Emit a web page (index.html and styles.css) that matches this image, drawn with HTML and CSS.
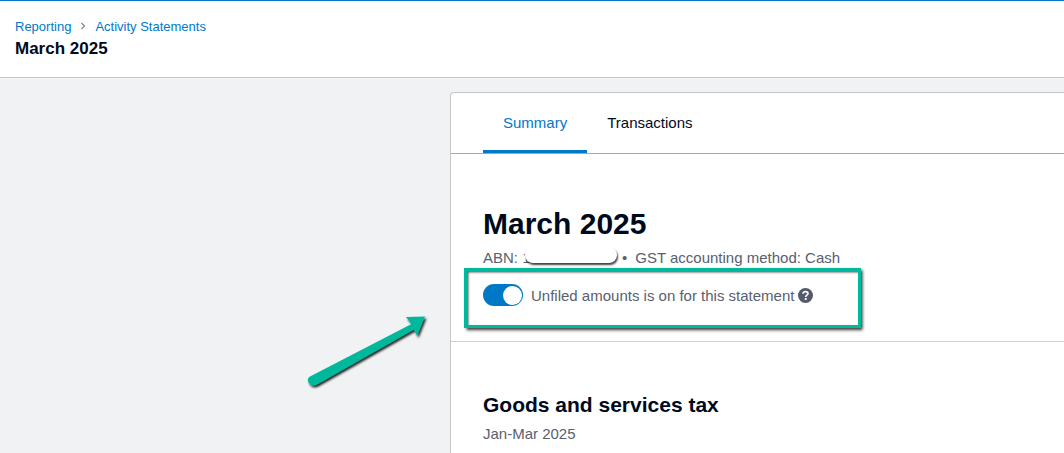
FILE: index.html
```html
<!DOCTYPE html>
<html lang="en">
<head>
    <meta charset="UTF-8">
    <meta name="viewport" content="width=device-width, initial-scale=1.0">
    <title>March 2025</title>
    <link rel="stylesheet" href="styles.css">
</head>
<body>
    <header class="page-header">
        <nav class="breadcrumbs">
            <a href="#">Reporting</a>
            <svg class="crumb-sep" width="6" height="8" viewBox="0 0 6 8"><path d="M1.5 1 L4.5 4 L1.5 7" fill="none" stroke="#7c8590" stroke-width="1.2"/></svg>
            <a href="#">Activity Statements</a>
        </nav>
        <div class="page-title">March 2025</div>
    </header>

    <main class="content">
        <section class="card">
            <div class="tabs">
                <a class="tab tab-active" href="#">Summary</a>
                <a class="tab" href="#">Transactions</a>
            </div>

            <div class="statement">
                <h1>March 2025</h1>
                <p class="meta">
                    <span class="abn">ABN: 1</span>
                    <span class="bullet">•</span>
                    <span>GST accounting method: Cash</span>
                </p>
                <div class="unfiled">
                    <span class="toggle"><span class="knob"></span></span>
                    <span>Unfiled amounts is on for this statement</span>
                    <svg class="help" width="15" height="15" viewBox="0 0 14 14">
                        <circle cx="7" cy="7" r="7" fill="#545a6a"/>
                        <path d="M4.7 5.400 C4.700 4.100 5.700 3.300 7 3.300 C8.300 3.300 9.300 4.100 9.300 5.200 C9.300 6.700 7.200 6.700 7.200 8.300" fill="none" stroke="#fff" stroke-width="1.6"/>
                        <rect x="6.300" y="9.300" width="1.800" height="1.800" fill="#fff"/>
                    </svg>
                </div>
                <div class="redaction"></div>
                <div class="highlight"></div>
            </div>

            <div class="gst">
                <h2>Goods and services tax</h2>
                <p class="period">Jan-Mar 2025</p>
            </div>
        </section>

        <svg class="arrow" width="140" height="90" viewBox="0 0 140 90">
            <defs>
                <filter id="arrow-shadow" x="-20%" y="-20%" width="140%" height="140%">
                    <feDropShadow dx="1.5" dy="2" stdDeviation="1.2" flood-color="#000" flood-opacity="0.85"/>
                </filter>
            </defs>
            <path filter="url(#arrow-shadow)" fill="#00b99c" d="M108.500 13 L103 6 L122 5.500 L114 25 L111 18.500 L14 73.500 Q8 76 5.500 71.500 Q3.500 67.500 7 65.500 Z"/>
        </svg>
    </main>
</body>
</html>
```

FILE: styles.css
```css
body {
    margin: 0;
    height: 453px;
    overflow: hidden;
    font-family: "Liberation Sans", Arial, sans-serif;
    background-color: #f1f2f4;
    color: #000a1e;
}

/* Top bar */
.page-header {
    box-sizing: border-box;
    height: 78px;
    padding: 17px 15px 0;
    background-color: #fff;
    border-top: 1px solid #0078c8;
    border-bottom: 1px solid #c4c6ca;
}

.breadcrumbs {
    display: flex;
    align-items: center;
    gap: 9px;
    height: 16px;
    font-size: 13px;
}

.breadcrumbs a {
    color: #0078c8;
    text-decoration: none;
}

.page-title {
    margin-top: 5px;
    font-size: 17px;
    line-height: 20px;
    font-weight: bold;
}

/* Main area */
.content {
    position: relative;
    height: 361px;
    padding: 14px 0 0 450px;
    overflow: hidden;
}

.card {
    background-color: #fff;
    border-left: 1px solid #c4c6ca;
    border-top: 1px solid #c4c6ca;
    border-top-left-radius: 4px;
    height: 400px;
}

/* Tabs */
.tabs {
    display: flex;
    height: 60px;
    padding-left: 32px;
    border-bottom: 1px solid #a4a8ae;
}

.tab {
    box-sizing: border-box;
    height: 60px;
    padding: 21px 20px 0;
    font-size: 15px;
    line-height: 18px;
    color: #000a1e;
    text-decoration: none;
}

.tab-active {
    color: #0078c8;
    border-bottom: 3px solid #0078c8;
}

/* Statement block */
.statement {
    position: relative;
    box-sizing: border-box;
    height: 188px;
    padding: 52px 32px 0;
    border-bottom: 1px solid #d0d2d5;
}

h1 {
    margin: 0;
    font-size: 30px;
    line-height: 36px;
    font-weight: bold;
}

.meta {
    display: flex;
    gap: 8px;
    margin: 7px 0 0;
    font-size: 15px;
    line-height: 18px;
    color: #59606e;
}

.abn {
    width: 131px;
}

.unfiled {
    display: flex;
    align-items: center;
    gap: 8px;
    margin-top: 17px;
    font-size: 15px;
    color: #59606e;
}

.toggle {
    display: block;
    box-sizing: border-box;
    width: 40px;
    height: 22px;
    padding: 1.5px 1.5px 1.5px 19.5px;
    border-radius: 11px;
    background-color: #0078c8;
}

.knob {
    display: block;
    width: 19px;
    height: 19px;
    border-radius: 50%;
    background-color: #fff;
}

.help {
    margin-left: -4px;
}

/* Annotations laid over the screenshot */
.redaction {
    position: absolute;
    left: 74px;
    top: 93px;
    width: 92px;
    height: 16px;
    border-radius: 8px;
    background-color: #fff;
    box-shadow: 1px 2px 2px rgba(0, 0, 0, 0.75);
}

.highlight {
    position: absolute;
    left: 13px;
    top: 114px;
    box-sizing: border-box;
    width: 397px;
    height: 60px;
    border: 3px solid #00b99c;
    box-shadow: 1.500px 2px 3px rgba(0, 0, 0, 0.8), inset 1.500px 1.500px 2px rgba(0, 0, 0, 0.6);
}

.arrow {
    position: absolute;
    left: 303px;
    top: 233px;
}

/* GST section */
.gst {
    padding-top: 51px;
    padding-left: 32px;
}

h2 {
    margin: 0;
    font-size: 21px;
    line-height: 24px;
    font-weight: bold;
}

.period {
    margin: 8px 0 0;
    font-size: 15px;
    line-height: 18px;
    color: #59606e;
}
```
